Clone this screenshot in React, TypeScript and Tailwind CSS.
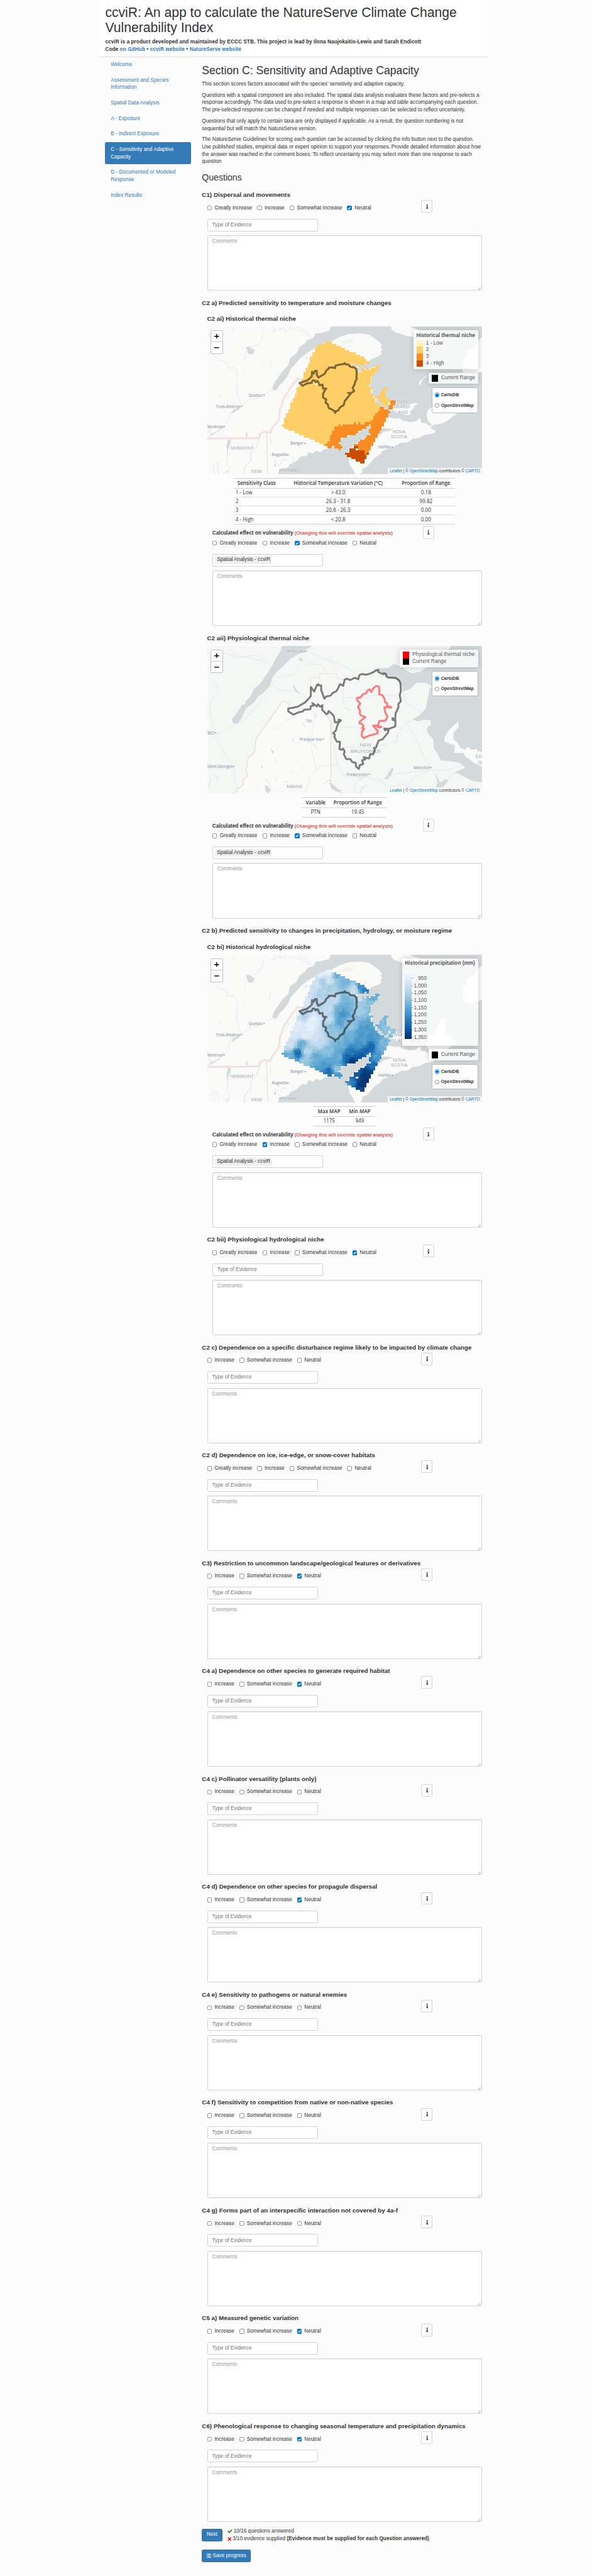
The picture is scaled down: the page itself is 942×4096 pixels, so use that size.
import React from 'react';
import { FaCheck, FaInfo, FaRegSave, FaTimes } from 'react-icons/fa';

const ROW_TOP = 195;
const ROW_H = 17.7;

type Span = [number, number];

const LOW_ROWS: Span[][] = [
  [[666, 702]], [[634, 725]], [[622, 749]], [[610, 770]], [[610, 794]], [[598, 829]], [[598, 853]],
  [[586, 874]], [[586, 886]], [[586, 898]], [[575, 806], [829, 874], [886, 898]], [[575, 829], [933, 956]],
  [[563, 841], [863, 874], [886, 898], [909, 945]], [[563, 841], [863, 945]], [[551, 933]], [[551, 921]],
  [[551, 909]], [[540, 909]], [[540, 909]], [[528, 909]], [[528, 898]], [[516, 921], [978, 1002]],
  [[516, 909], [968, 990]], [[516, 909], [956, 990]], [[505, 921], [956, 990]], [[505, 921], [933, 990]],
  [[494, 933], [945, 1013]], [[494, 933], [956, 1013]], [[482, 945], [968, 1002]], [[482, 956], [978, 990]],
  [[482, 956]], [[470, 956]], [[470, 945]], [[459, 933]], [[459, 921]], [[447, 921]], [[447, 909]],
  [[447, 818], [829, 841], [853, 874]], [[435, 737], [749, 759]], [[447, 714]], [[470, 714]], [[505, 702]],
  [[528, 702]], [[551, 690]], [[586, 690]], [[610, 690]], [[634, 678]], [[655, 666]],
];

const MID_ROWS: Record<number, Span[]> = {
  27: [[1013, 1037]], 28: [[1013, 1037]], 29: [[1002, 1025]], 30: [[956, 978], [1002, 1025]], 31: [[956, 1002]],
  32: [[945, 1013]], 33: [[933, 1002]], 34: [[921, 1002]], 35: [[921, 990]], 36: [[909, 990]],
  37: [[818, 829], [841, 853], [874, 978]], 38: [[737, 749], [759, 898], [909, 978]], 39: [[714, 886], [909, 966]],
  40: [[714, 862], [898, 966]], 41: [[702, 841], [898, 956]], 42: [[702, 829], [909, 945]],
  43: [[690, 782], [886, 945]], 44: [[690, 749], [874, 933]], 45: [[690, 749], [853, 933]],
  46: [[678, 737], [841, 921]], 47: [[666, 749], [818, 921]], 48: [[678, 702], [714, 759], [841, 909]],
  49: [[737, 749], [841, 909]], 50: [[874, 898]], 51: [[874, 886]],
};

const HIGH_ROWS: Record<number, Span[]> = {
  48: [[818, 841]], 49: [[794, 829]], 50: [[794, 874]], 51: [[770, 874], [886, 898]], 52: [[782, 886]],
  53: [[806, 886]], 54: [[829, 874]], 55: [[853, 874]],
};

const rowPath = (rows: Array<[number, Span[]]>) =>
  rows
    .flatMap(([k, spans]) =>
      spans.map(([a, b]) => `M${a} ${(ROW_TOP + k * ROW_H).toFixed(1)}H${b}v${ROW_H + 0.1}H${a}Z`),
    )
    .join('');

const toRows = (r: Record<number, Span[]>): Array<[number, Span[]]> =>
  Object.entries(r).map(([k, v]) => [Number(k), v]);

const lowRows: Array<[number, Span[]]> = LOW_ROWS.map((s, k) => [k, s]);
const LOW_PATH = rowPath(lowRows);
const MID_PATH = rowPath(toRows(MID_ROWS));
const HIGH_PATH = rowPath(toRows(HIGH_ROWS));

const RAIN: Array<[number, number, number]> = [
  [685, 206, 0.08], [640, 226, 0.1], [620, 306, 0.2], [600, 346, 0.22], [740, 276, 0.42], [770, 296, 0.48],
  [730, 241, 0.5], [650, 296, 0.35], [690, 286, 0.2], [860, 336, 0.65], [880, 356, 0.7], [820, 356, 0.25],
  [640, 386, 0.32], [700, 346, 0.35], [570, 456, 0.15], [630, 446, 0.3], [720, 436, 0.25], [770, 436, 0.45],
  [760, 546, 0.62], [740, 506, 0.5], [770, 486, 0.52], [740, 616, 0.55], [680, 506, 0.25], [690, 606, 0.25],
  [560, 566, 0.3], [600, 606, 0.08], [590, 656, 0.08], [520, 656, 0.12], [500, 726, 0.15], [560, 726, 0.12],
  [620, 746, 0.18], [545, 796, 0.5], [480, 806, 0.2], [640, 786, 0.25], [440, 876, 0.55], [450, 826, 0.25],
  [520, 876, 0.8], [490, 906, 0.5], [560, 926, 0.38], [570, 856, 0.3], [620, 906, 0.5], [680, 856, 0.42],
  [700, 646, 0.42], [720, 726, 0.4], [800, 646, 0.4], [880, 666, 0.58], [860, 746, 0.58], [920, 746, 0.6],
  [900, 486, 0.42], [860, 436, 0.35], [920, 406, 0.5], [850, 526, 0.35], [800, 746, 0.5], [750, 826, 0.5],
  [740, 906, 0.5], [780, 906, 0.8], [810, 936, 0.97], [800, 866, 0.72], [880, 846, 0.8], [910, 816, 0.8],
  [850, 896, 0.85], [870, 786, 0.58], [980, 606, 0.45], [980, 666, 0.42], [1020, 696, 0.4], [980, 786, 0.45],
  [960, 826, 0.5], [940, 906, 0.6], [920, 966, 0.75], [680, 1026, 0.78], [660, 966, 0.58], [690, 1056, 0.7],
  [730, 1006, 0.4], [740, 1056, 0.6], [640, 1006, 0.6], [840, 1046, 0.85], [890, 1046, 0.98], [870, 1066, 0.98],
  [800, 1106, 0.7], [785, 1126, 0.62], [860, 1126, 0.98], [850, 1166, 0.9], [850, 806, 0.62],
];

const BLUES = [
  [247, 251, 255], [222, 235, 247], [198, 219, 239], [158, 202, 225], [107, 174, 214],
  [66, 146, 198], [33, 113, 181], [8, 81, 156], [8, 48, 107],
];

const blue = (v: number) => {
  const t = Math.max(0, Math.min(0.999, v)) * 8;
  const i = Math.floor(t);
  const f = t - i;
  return `rgb(${BLUES[i].map((c, n) => Math.round(c + (BLUES[i + 1][n] - c) * f)).join(',')})`;
};

const rainAt = (x: number, y: number) => {
  let sum = 0;
  let weight = 0;
  for (const [px, py, v] of RAIN) {
    const dx = (x - px) * 0.51;
    const dy = (y - py) / 3;
    const w = 1 / Math.pow(dx * dx + dy * dy + 4, 1.7);
    sum += w * v;
    weight += w;
  }
  const noise = Math.sin(x * 12.9898 + y * 78.233) * 43758.5453;
  return sum / weight + (noise - Math.floor(noise) - 0.5) * 0.06;
};

const CELL = 11.75;
const rainCells = [...lowRows, ...toRows(MID_ROWS), ...toRows(HIGH_ROWS)].flatMap(([k, spans]) =>
  spans.flatMap(([a, b]) => {
    const n = Math.max(1, Math.round((b - a) / CELL));
    const w = (b - a) / n;
    return Array.from({ length: n }, (_, i) => {
      const x = a + i * w;
      const y = ROW_TOP + k * ROW_H;
      return { x, y, w, fill: blue(rainAt(x + w / 2, y + ROW_H / 2)) };
    });
  }),
);

const RANGE =
  'M530,530L570,512 595,480 597,440 605,455 612,433 622,433 622,465 630,487 650,470 665,455 672,430 685,415 685,407 710,405 718,412 722,390 750,380 765,378 770,370 775,380 790,382 800,400 820,405 830,415 834,450 832,480 834,497 826,520 822,545 812,572 820,598 805,612 787,612 805,612 790,640 770,680 765,710 745,730 735,755 722,760 720,775 715,760 700,745 685,735 680,705 668,690 672,665 655,650 655,620 665,590 660,578 673,578 655,575 652,545 635,550 630,525 625,515 615,525 612,512 600,510 595,530 570,535 548,555Z';

const MapText = ({ x, y, w, size = 11, bold, children }: { x: number; y: number; w: number; size?: number; bold?: boolean; children: string }) => (
  <text
    transform={`translate(${x} ${y + size * 1.05}) scale(1.96 3)`}
    fontSize={size}
    textLength={w / 1.96}
    lengthAdjust="spacingAndGlyphs"
    fontFamily="Open Sans, Noto Sans, sans-serif"
    fontWeight={bold ? 500 : 600}
    fill="#97a4b1"
    stroke="#fafaf8"
    strokeWidth={1.2}
    paintOrder="stroke"
  >
    {children}
  </text>
);

const Dot = ({ x, y }: { x: number; y: number }) => <rect x={x - 3} y={y - 5} width={6} height={9} fill="#8494a4" />;

const RegionalBase = () => (
  <g>
    <rect x={41} y={72} width={1458} height={1200} fill="#fafaf8" />
    <g fill="#d4dadc">
      <path d="M697,72L688,108 640,125 615,130 605,165 572,180 560,210 530,240 515,290 480,330 470,390 440,435 415,490 398,525 385,575 395,592 410,585 425,545 442,525 470,465 482,420 510,375 535,330 570,288 612,250 650,215 700,195 740,160 790,135 850,128 900,140 935,175 955,200 970,232 958,235 970,260 960,280 968,292 950,315 915,335 898,355 890,378 830,375 806,372 806,388 840,400 843,440 860,440 862,418 900,415 930,400 945,400 920,465 910,490 910,550 898,560 920,585 912,610 925,640 940,660 935,690 950,720 970,745 1000,770 1005,810 1040,822 1060,818 1080,838 1120,850 1150,842 1170,812 1175,855 1200,858 1225,885 1232,870 1210,830 1205,790 1212,750 1240,715 1265,650 1285,600 1300,588 1308,610 1302,660 1310,720 1335,720 1340,760 1370,775 1335,815 1310,845 1290,858 1240,872 1225,895 1255,925 1240,940 1190,955 1170,975 1130,985 1100,1015 1070,1015 1020,1055 970,1085 960,1110 930,1140 900,1190 885,1215 865,1225 860,1265 845,1272 1499,1272 1499,72Z" />
      <path d="M415,1272L425,1235 470,1215 480,1190 515,1165 530,1140 550,1120 565,1130 580,1090 600,1105 620,1080 640,1095 660,1070 700,1062 750,1050 740,1000 755,985 780,965 835,945 865,915 895,885 908,868 905,905 915,940 890,965 855,995 820,1030 800,1070 775,1110 790,1140 795,1195 815,1235 825,1272Z" />
      <path d="M925,950L950,915 980,900 1025,905 1010,918 975,930 955,955 930,965Z" />
      <path d="M243,240L262,235 275,250 290,262 288,290 270,300 255,292 252,265Z" />
      <path d="M168,778L178,752 200,738 213,730 207,750 190,760 178,776Z" />
      <path d="M41,975L60,945 95,925 118,895 112,912 78,945Z" />
      <path d="M150,985L165,990 160,1030 148,1085 152,1150 146,1100 143,1050Z" />
      <path d="M246,935L252,930 254,965 248,985ZM393,1190L405,1188 403,1210 395,1205ZM565,322L572,325 570,338 563,332Z" />
    </g>
    <g fill="#fafaf8">
      <path d="M1018,72L1018,95 1035,115 1060,130 1100,150 1140,160 1165,145 1160,110 1175,105 1130,85 1120,72Z" />
      <path d="M1499,160L1470,190 1460,240 1410,270 1420,300 1400,340 1395,420 1400,450 1410,468 1450,462 1499,440Z" />
      <path d="M1002,690L1025,700 1045,715 1080,712 1110,705 1150,695 1163,700 1140,715 1135,745 1118,755 1120,790 1095,795 1070,775 1030,778 1000,740Z" />
      <path d="M1162,545L1168,515 1195,480 1215,465 1185,500 1173,530 1178,545Z" />
    </g>
    <path d="M745,200L780,180 805,178 812,162 820,185 815,205 780,208 770,215Z" fill="#f2f4f2" />
    <g fill="none" stroke="#d9dfe2" strokeWidth={0.6}>
      <g>
        <path vectorEffect="non-scaling-stroke" d="M348,72L335,130 330,180 310,225 270,235M390,72L400,95 380,120 430,90M420,72L425,100 450,85 460,125M480,72L475,90 530,105 590,155 605,170M515,72L560,110 580,135 595,165M45,130L60,170 95,200 120,230 138,262M41,290L75,300 100,345 140,365 150,410 185,405 200,450 195,600 220,710M170,85L180,110 165,140M245,290L240,330 245,350M240,455L238,490M105,620L115,650 110,630" />
        <path vectorEffect="non-scaling-stroke" d="M340,628L370,600 395,588M340,632L300,660 260,665 220,720 165,760 150,830 130,890 60,950M200,585L185,560M317,980L300,1060 270,1100 272,1160 240,1210 236,1272M355,1100L350,1080M165,1000L160,1100M150,1080L145,1180 160,1230 125,1272M460,678L470,640 500,600 520,550M370,960L380,1000 376,1030M395,1210L400,1160 430,1230 440,1272M430,1190L440,1150 470,1160M500,1195L495,1150 510,1130M540,1190L560,1140 575,1160M82,1272L70,1200 95,1180 100,1272M380,370L370,410 375,440M330,370L340,395M1150,1010L1130,960M960,700L970,720" />
      </g>
    </g>
    <g fill="none">
      <path vectorEffect="non-scaling-stroke" stroke="#f5eded" strokeWidth={4} d="M41,983L315,980 320,945 345,925 375,935 385,895 420,835 428,740 445,660 490,555 520,495 538,505" />
      <path vectorEffect="non-scaling-stroke" stroke="#ecd3d5" strokeWidth={1} d="M41,983L315,980 325,940 345,925 355,935 375,935 385,895 412,845 425,800 422,750 440,700 450,645 490,555 520,495 538,505 M355,935L362,1272M41,870L60,945M145,1272L148,1240 158,1260M317,980L320,950" />
      <path vectorEffect="non-scaling-stroke" stroke="#dfe0e2" strokeWidth={0.8} d="M317,985L300,1060 272,1100 268,1170 240,1210 236,1272" />
    </g>
    <MapText x={260} y={630} w={75}>Quebec</MapText><Dot x={342} y={630} />
    <MapText x={86} y={722} w={130}>Trois-Rivières</MapText><Dot x={222} y={722} />
    <MapText x={41} y={887} w={84}>Montreal</MapText><Dot x={130} y={887} />
    <MapText x={482} y={1023} w={70}>Bangor</MapText><Dot x={560} y={1022} />
    <MapText x={382} y={1115} w={82}>Augusta</MapText><Dot x={469} y={1115} />
    <MapText x={432} y={1241} w={84}>Portland</MapText><Dot x={426} y={1241} />
    <MapText x={948} y={1052} w={67}>Halifax</MapText><Dot x={1022} y={1052} />
    <MapText x={165} y={1061} w={122} size={12.5} bold>VERMONT</MapText>
    <MapText x={272} y={1249} w={59} size={12.5} bold>NEW</MapText>
    <MapText x={1015} y={681} w={90} size={12.5} bold>PRINCE</MapText>
    <MapText x={1005} y={724} w={110} size={12.5} bold>EDWARD</MapText>
    <MapText x={1015} y={768} w={90} size={12.5} bold>ISLAND</MapText>
    <MapText x={1024} y={925} w={69} size={12.5} bold>NOVA</MapText>
    <MapText x={1015} y={969} w={88} size={12.5} bold>SCOTIA</MapText>
  </g>
);

const RangeOutline = () => (
  <path d={RANGE} vectorEffect="non-scaling-stroke" fill="none" stroke="#000" strokeOpacity={0.5} strokeWidth={3.2} strokeLinejoin="round" />
);

const ThermalMap = () => (
  <svg viewBox="41 72 1458 1200" preserveAspectRatio="none" className="block h-full w-full">
    <RegionalBase />
    <path d={LOW_PATH} fill="#fecf67" shapeRendering="crispEdges" />
    <path d={MID_PATH} fill="#f98c22" shapeRendering="crispEdges" />
    <path d={HIGH_PATH} fill="#cc4c02" shapeRendering="crispEdges" />
    <path d="M610,531h24v18h-24ZM551,549h12v18h-12ZM598,514h12v17h-12Z" fill="#fff2b0" />
    <RangeOutline />
  </svg>
);

const RainMap = () => (
  <svg viewBox="41 72 1458 1200" preserveAspectRatio="none" className="block h-full w-full">
    <RegionalBase />
    <g shapeRendering="crispEdges">
      {rainCells.map((c, i) => (
        <rect key={i} x={c.x} y={c.y} width={c.w + 0.3} height={ROW_H + 0.3} fill={c.fill} />
      ))}
    </g>
    <RangeOutline />
  </svg>
);

const PhysiologicalMap = () => (
  <svg viewBox="41 141 1458 1200" preserveAspectRatio="none" className="block h-full w-full">
    <rect x={41} y={141} width={1458} height={1200} fill="#f5f7f5" />
    <path d="M180,1341L230,1270 245,1200 250,1080 290,1005 305,890 440,590 470,600 475,650 500,700 590,640 640,650 695,745 697,1200 700,1260 760,1341Z" fill="#fafaf8" />
    <g fill="#d4dadc">
      <path d="M437,141L430,180 405,240 385,300 350,385 325,440 290,490 265,560 230,610 200,680 170,740 180,775 205,770 225,720 245,650 290,600 305,560 340,520 375,460 385,400 410,350 440,310 480,250 540,190 600,141Z" />
      <path d="M920,330L950,320 1000,322 1030,288 1070,310 1110,350 1125,365 1170,350 1210,310 1240,270 1300,200 1325,165 1335,141 1499,141 1499,1248 1450,1240 1400,1200 1355,1165 1410,1130 1380,1090 1310,1075 1280,1070 1265,1020 1245,980 1240,900 1210,850 1205,810 1228,780 1225,745 1190,740 1160,755 1130,740 1170,700 1200,650 1215,540 1220,490 1235,470 1200,440 1150,440 1120,490 1080,510 1066,440 1040,405 1000,398 960,350Z" />
      <path d="M1248,1170L1262,1210 1278,1250 1305,1222 1322,1230 1310,1255 1290,1290 1255,1290 1262,1250Z" />
      <path d="M540,235L548,262 524,264 530,245ZM560,735L595,740 600,760 575,765ZM980,1220L1000,1180 1020,1130 1030,1140 1015,1190 1000,1225ZM690,1250L720,1280 740,1310 760,1310 735,1330 700,1300ZM350,1270L370,1290 380,1310 360,1341 345,1300ZM375,975L395,1000 390,1020ZM490,880L500,920 492,910ZM325,1105L335,1130 328,1135ZM495,450L515,500 540,535 510,515 498,480Z" />
    </g>
    <path d="M215,605L245,598 240,615 220,622Z" fill="#f5f7f5" />
    <path d="M1371,755L1375,800 1350,840 1345,895 1370,930 1385,970 1410,985 1425,955 1440,985 1499,975 1499,1120 1460,1095 1430,1060 1410,1040 1400,1010 1350,1010 1355,950 1300,918 1300,885 1320,830Z" fill="#fafaf8" />
    <g fill="none" strokeWidth={0.7} stroke="#dde2e4">
      <path vectorEffect="non-scaling-stroke" d="M41,200L150,205 200,235 300,215 360,280M150,160L200,220 330,260 350,310M80,430L100,500 60,600 55,700 80,830M385,450L430,500 520,510 560,560M385,450L350,540 240,740 130,830 80,870M80,880L120,980 180,1130 200,1330M530,300L500,370 410,400M560,290L640,290 690,400M680,235L705,270 710,300M760,430L765,620M540,160L650,240 760,300 820,350M640,720L690,700M630,640L600,800 590,950 620,1140M700,740L705,900 730,1100 700,1110M520,710L450,750 410,820 390,820M730,1100L760,1190 840,1200 900,1210 960,1240M715,1110L640,1120 590,1190 560,1341M730,960L880,970 960,950 1050,910 1050,850 1090,780 1130,740M1080,510L1090,600 1200,700M1100,780L1150,900 1200,1080 1225,1140M960,1230L1040,1180 1220,1150 1310,1150 1400,1110M870,1190L820,1280 830,1341M940,1210L1000,1290 1100,1260 1080,1341M1225,1150L1140,1200 1100,1300M850,560L860,580M760,560L880,570 930,540 1060,540M740,800L860,800 900,830 1000,840M600,940L620,970M400,1050L410,1100M480,1180L500,1160M540,1100L550,1150M620,1130L615,1170" />
      <path vectorEffect="non-scaling-stroke" stroke="#cdd5da" d="M600,670L620,710 605,715M770,640L795,660M75,1190L95,1210 90,1240M60,1210L50,1290M540,760L560,800M1050,870L1050,910 1030,930M410,1240L400,1210M840,1200L855,1225 880,1200M350,1220L370,1260 385,1300M600,930L618,968M450,1250L470,1240M660,1260L690,1230 700,1290M850,1341L865,1290 890,1270" />
    </g>
    <g fill="none" stroke="#ecd0d3" strokeWidth={1.1}>
      <path vectorEffect="non-scaling-stroke" d="M178,1341L205,1300 230,1270 232,1225 255,1200 245,1150 255,1110 250,1080 265,1040 290,1005 300,895 440,590 472,605 472,650M670,700L695,745 697,1200 693,1240 710,1290 760,1341" />
      <path vectorEffect="non-scaling-stroke" strokeDasharray="1.5 1.2" d="M590,480V402H636V367H728V400L745,405 775,425M1325,1225L1345,1178H1365" />
    </g>
    <MapText x={464} y={184} w={94}>Rimouski</MapText><Dot x={564} y={184} />
    <MapText x={41} y={850} w={38}>BEC</MapText><Dot x={85} y={847} />
    <MapText x={531} y={901} w={118}>Presque Isle</MapText><Dot x={656} y={899} />
    <MapText x={41} y={1122} w={134}>Saint-Georges</MapText><Dot x={181} y={1120} />
    <MapText x={1135} y={1131} w={88}>Moncton</MapText><Dot x={1228} y={1129} />
    <MapText x={780} y={1185} w={114}>Fredericton</MapText><Dot x={901} y={1184} />
    <MapText x={461} y={1282} w={86} size={13} bold>MAINE</MapText>
    <MapText x={849} y={947} w={63} size={13} bold>NEW</MapText>
    <MapText x={800} y={995} w={161} size={13} bold>BRUNSWICK</MapText>
    <MapText x={1474} y={992} w={25} size={13} bold>PR</MapText>
    <MapText x={1464} y={1038} w={34} size={13} bold>ED</MapText>
    <MapText x={1476} y={1085} w={22} size={13} bold>IS</MapText>
    <g fill="none" strokeWidth={3} strokeLinejoin="round" strokeLinecap="round">
      <path
        vectorEffect="non-scaling-stroke"
        stroke="#000"
        strokeOpacity={0.5}
        d="M470,650L520,635 560,600 590,550 590,475 608,512 622,460 630,452 630,462 645,462 645,500 655,540 662,570 672,552 695,545 705,525 725,510 735,485 745,452 762,465 770,415 780,408 800,418 825,400 842,412 848,378 860,370 885,375 915,360 935,342 948,338 950,355 975,372 978,362 990,370 990,385 1000,398 1040,402 1058,420 1066,445 1068,510 1062,540 1068,590 1055,612 1055,640 1040,690 1038,740 1023,728 1025,742 1040,750 1038,795 1005,815 980,812 983,825 1003,820 1000,845 970,900 950,910 935,970 925,970 930,990 920,1022 905,1020 900,1055 870,1045 880,1062 862,1070 868,1100 850,1110 845,1140 830,1120 828,1090 810,1085 800,1060 778,1060 765,1020 770,1000 762,975 755,985 742,978 745,920 728,918 715,880 718,862 708,850 723,830 730,790 738,765 750,745 738,740 738,762 718,762 712,710 700,690 685,670 680,690 672,695 650,660 652,622 640,635 628,615 622,632 598,605 605,625 590,630 588,655 555,660 545,675 525,680 498,700 470,672Z"
      />
      <path
        vectorEffect="non-scaling-stroke"
        stroke="#f00"
        strokeOpacity={0.5}
        d="M935,470L945,466 953,475 953,535 968,540 980,565 985,600 995,605 995,625 1018,640 980,640 985,680 997,718 985,750 955,750 945,790 965,800 950,804 940,788 920,788 945,830 945,850 900,870 872,890 860,870 862,840 873,815 862,810 870,795 862,775 848,770 850,755 880,720 855,705 850,690 852,665 840,640 853,610 835,580 836,565 858,555 865,535 885,525 890,505 902,495 912,515 918,495 925,480Z"
      />
    </g>
  </svg>
);

const LayerPicker = () => (
  <div className="flex h-69 w-125 flex-col gap-14 rounded-[3px] border border-[#b4b8ba] bg-white pt-12 pl-6 text-[7.05px] font-bold leading-14">
    <div className="flex items-center gap-4">
      <span className="flex h-13 w-13 items-center justify-center rounded-full border border-[#2a86d8]">
        <span className="h-8 w-8 rounded-full bg-[#0075d8]" />
      </span>
      CartoDB
    </div>
    <div className="flex items-center gap-4">
      <span className="h-13 w-13 rounded-full border border-[#8a8a8a]" />
      OpenStreetMap
    </div>
  </div>
);

const LEGEND = 'rounded-[3px] bg-white/80 shadow-[0_0_9px_rgba(0,0,0,0.2)] text-[8.22px] text-[#555]';

const Key = ({ color, children }: { color: string; children: string }) => (
  <div className="flex h-18 items-center gap-8 whitespace-nowrap leading-18">
    <span className={`h-18 w-18 ${color}`} />
    {children}
  </div>
);

const CurrentRange = () => (
  <div className={`${LEGEND} h-30 w-134 px-8 py-6`}>
    <Key color="bg-black">Current Range</Key>
  </div>
);

const MapFrame = ({ map, children }: { map: React.ReactNode; children: React.ReactNode }) => (
  <div className="relative ml-14 h-400 w-744 overflow-hidden">
    {map}
    <div className="absolute top-10 left-10 flex h-64 w-33 flex-col rounded-[2px] border border-[#bfc3c4] bg-white text-black">
      <span className="flex flex-1 items-center justify-center border-b border-[#ccc]">
        <svg viewBox="0 0 12 12" className="h-13 w-13"><path d="M6 0v12M0 6h12" stroke="#000" strokeWidth="2.2" /></svg>
      </span>
      <span className="flex flex-1 items-center justify-center">
        <svg viewBox="0 0 12 12" className="h-13 w-13"><path d="M0 6h12" stroke="#000" strokeWidth="2.2" /></svg>
      </span>
    </div>
    <div className="absolute top-10 right-10 flex flex-col items-end gap-10">{children}</div>
    <div className="absolute right-0 bottom-0 h-17 w-254 bg-white/70 pl-5 text-[6.46px] leading-17 whitespace-nowrap">
      <span className="text-[#0078a8]">Leaflet</span> | © <span className="text-[#0078a8]">OpenStreetMap</span> contributors ©{' '}
      <span className="text-[#0078a8]">CARTO</span>
    </div>
  </div>
);

const Box = ({ checked }: { checked?: boolean }) =>
  checked ? (
    <span className="flex h-13 w-13 shrink-0 items-center justify-center rounded-[1.5px] bg-[#0075d8]">
      <svg viewBox="0 0 13 13" className="h-full w-full">
        <path d="M3 6.8l2.4 2.5L10 3.6" fill="none" stroke="#fff" strokeWidth="2" />
      </svg>
    </span>
  ) : (
    <span className="h-13 w-13 shrink-0 rounded-[1.5px] border border-[#8f8f8f] bg-white" />
  );

const WIDTHS: Record<string, string> = {
  'Greatly increase': 'w-136',
  Increase: 'w-87.5',
  'Somewhat increase': 'w-156',
  Neutral: 'w-80',
};

const Choices = ({ picked, short }: { picked?: string; short?: boolean }) => (
  <div className="flex h-20 items-center text-[8.22px] leading-20">
    {Object.keys(WIDTHS)
      .slice(short ? 1 : 0)
      .map((name) => (
        <label key={name} className={`flex shrink-0 items-center gap-7 whitespace-nowrap ${WIDTHS[name]}`}>
          <Box checked={picked === name} />
          {name}
        </label>
      ))}
  </div>
);

const InfoButton = () => (
  <span className="flex h-34 w-31 shrink-0 items-center justify-center rounded-[2.4px] border border-[#d2d2d2] bg-white">
    <FaInfo className="h-12 w-6" />
  </span>
);

const Answer = ({ chip }: { chip?: boolean }) => (
  <>
    <div className="flex h-34 w-300 items-center rounded-[2.4px] border border-[#d2d2d2] bg-white text-[8.22px] text-[#777]">
      {chip ? (
        <span className="ml-6 h-22 rounded-[2px] bg-[#efefef] px-5 leading-22 text-[#333]">Spatial Analysis - ccviR</span>
      ) : (
        <span className="ml-12 leading-20">Type of Evidence</span>
      )}
    </div>
    <div className="relative mt-11 h-150 rounded-[2.4px] border border-[#d2d2d2] bg-white pt-5 pl-12 text-[8.22px] leading-20 text-[#999] shadow-[inset_0_1px_1px_rgba(0,0,0,0.06)]">
      Comments
      <svg viewBox="0 0 9 9" className="absolute right-0 bottom-0 h-9 w-9">
        <path d="M1 8L8 1M5 8l3-3" stroke="#666" strokeWidth="1" />
      </svg>
    </div>
  </>
);

const Heading = ({ children }: { children: string }) => (
  <h4 className="text-[9.85px] font-bold leading-20 whitespace-nowrap">{children}</h4>
);

const Question = ({ title, picked, short, nested }: { title: string; picked?: string; short?: boolean; nested?: boolean }) => (
  <section className={`h-292 ${nested ? 'pl-14' : ''}`}>
    <div className="h-24">
      <Heading>{title}</Heading>
    </div>
    <div className="pl-14">
      <div className={`flex h-50 justify-between ${nested ? 'pr-129' : 'pr-133'}`}>
        <div className="pt-11">
          <Choices picked={picked} short={short} />
        </div>
        <InfoButton />
      </div>
      <Answer />
    </div>
  </section>
);

const SpatialAnswer = ({ picked }: { picked: string }) => (
  <section className="mt-4 h-293 pl-28">
    <div className="flex h-75 justify-between pr-129">
      <div className="pt-10">
        <p className="h-26 text-[8.22px] font-bold leading-20 whitespace-nowrap">
          Calculated effect on vulnerability{' '}
          <span className="text-[7.4px] text-[#d9534f]">(Changing this will override spatial analysis)</span>
        </p>
        <Choices picked={picked} />
      </div>
      <InfoButton />
    </div>
    <Answer chip />
  </section>
);

const DataTable = ({ cols, head, rows, leftFirst, width }: { cols: string; head: string[]; rows: string[][]; leftFirst?: boolean; width: string }) => (
  <div className="mt-10 flex w-772 justify-center">
    <div className={`border-y border-[#d0d0d0] bg-white font-['Open_Sans','Noto_Sans',sans-serif] text-[8.1px] ${width}`}>
      <div className={`grid h-27 items-center border-b border-[#d0d0d0] text-center text-[7.95px] font-semibold leading-24 whitespace-nowrap ${cols}`}>
        {head.map((h) => (
          <span key={h}>{h}</span>
        ))}
      </div>
      {rows.map((r, i) => (
        <div key={r[0]} className={`grid h-24 items-center text-center leading-22 ${cols} ${i < rows.length - 1 ? 'border-b border-[#dedede]' : ''}`}>
          {r.map((c, j) => (
            <span key={j} className={j === 0 && leftFirst ? 'pl-5 text-left' : ''}>
              {c}
            </span>
          ))}
        </div>
      ))}
    </div>
  </div>
);

const NAV: Array<[string, string?]> = [
  ['Welcome'],
  ['Assessment and Species', 'Information'],
  ['Spatial Data Analysis'],
  ['A - Exposure'],
  ['B - Indirect Exposure'],
  ['C - Sensitivity and Adaptive', 'Capacity'],
  ['D - Documented or Modeled', 'Response'],
  ['Index Results'],
];

const INTRO = [
  ["This section scores factors associated with the species' sensitivity and adaptive capacity."],
  [
    'Questions with a spatial component are also included. The spatial data analysis evaluates these factors and pre-selects a',
    'response accordingly. The data used to pre-select a response is shown in a map and table accompanying each question.',
    'The pre-selected response can be changed if needed and multiple responses can be selected to reflect uncertainty.',
  ],
  [
    'Questions that only apply to certain taxa are only displayed if applicable. As a result, the question numbering is not',
    'sequential but will match the NatureServe version.',
  ],
  [
    'The NatureServe Guidelines for scoring each question can be accessed by clicking the info button next to the question.',
    'Use published studies, empirical data or expert opinion to support your responses. Provide detailed information about how',
    'the answer was reached in the comment boxes. To reflect uncertainty you may select more than one response to each',
    'question',
  ],
];

const RAIN_TICKS = ['950', '1,000', '1,050', '1,100', '1,150', '1,200', '1,250', '1,300', '1,350'];

const REST: Array<[string, string?, boolean?]> = [
  ['C2 c) Dependence on a specific disturbance regime likely to be impacted by climate change'],
  ['C2 d) Dependence on ice, ice-edge, or snow-cover habitats', undefined, true],
  ['C3) Restriction to uncommon landscape/geological features or derivatives', 'Neutral'],
  ['C4 a) Dependence on other species to generate required habitat', 'Neutral'],
  ['C4 c) Pollinator versatility (plants only)'],
  ['C4 d) Dependence on other species for propagule dispersal', 'Neutral'],
  ['C4 e) Sensitivity to pathogens or natural enemies'],
  ['C4 f) Sensitivity to competition from native or non-native species'],
  ['C4 g) Forms part of an interspecific interaction not covered by 4a-f'],
  ['C5 a) Measured genetic variation', 'Neutral'],
  ['C6) Phenological response to changing seasonal temperature and precipitation dynamics', 'Neutral'],
];

export default function App() {
  return (
    <div className="min-h-screen overflow-hidden bg-[#fcfcfc] font-['Liberation_Sans',Arial,sans-serif] text-[#333] [--spacing:0.5874px]">
      <div className="ml-270 w-1050">
        <header className="h-155 border-b border-[#ddd] bg-white px-15 pt-14">
          <h1 className="text-[21.15px] leading-40 whitespace-nowrap">
            ccviR: An app to calculate the NatureServe Climate Change
            <br />
            Vulnerability Index
          </h1>
          <p className="mt-10 text-[8.22px] font-bold leading-20 tracking-[0.075px] whitespace-nowrap">
            ccviR is a product developed and maintained by ECCC STB. This project is lead by Ilona Naujokaitis-Lewis and Sarah Endicott
            <br />
            Code <a className="text-[#337ab7]">on GitHub</a> • <a className="text-[#337ab7]">ccviR website</a> •{' '}
            <a className="text-[#337ab7]">NatureServe website</a>
          </p>
        </header>
        <div className="flex">
          <nav className="flex w-262 shrink-0 flex-col gap-2 px-15 text-[8.22px] leading-20">
            {NAV.map(([a, b]) => (
              <a
                key={a}
                className={`rounded-[2.4px] px-15 py-10 whitespace-nowrap ${a.startsWith('C ') ? 'bg-[#337ab7] text-white' : 'text-[#337ab7]'}`}
              >
                {a}
                {b && <br />}
                {b}
              </a>
            ))}
          </nav>
          <main className="w-788 shrink-0 pt-20 pr-15 pl-15">
            <h2 className="h-43 text-[17.62px] leading-33 whitespace-nowrap">Section C: Sensitivity and Adaptive Capacity</h2>
            {INTRO.map((lines) => (
              <p key={lines[0]} className="mb-10 text-[8.22px] leading-20 whitespace-nowrap">
                {lines.map((l) => (
                  <React.Fragment key={l}>
                    {l}
                    <br />
                  </React.Fragment>
                ))}
              </p>
            ))}
            <h3 className="h-60 pt-10 text-[14.1px] leading-26">Questions</h3>

            <Question title="C1) Dispersal and movements" picked="Neutral" />

            <div className="h-43">
              <Heading>C2 a) Predicted sensitivity to temperature and moisture changes</Heading>
            </div>
            <div className="h-31 pl-14">
              <Heading>C2 ai) Historical thermal niche</Heading>
            </div>
            <MapFrame map={<ThermalMap />}>
              <div className={`${LEGEND} h-105 w-175 px-8 pt-6`}>
                <p className="h-21 font-bold leading-18 whitespace-nowrap">Historical thermal niche</p>
                <Key color="bg-[#fff5b8]">1 - Low</Key>
                <Key color="bg-[#fecf67]">2</Key>
                <Key color="bg-[#f98c22]">3</Key>
                <Key color="bg-[#cc4c02]">4 - High</Key>
              </div>
              <CurrentRange />
              <LayerPicker />
            </MapFrame>
            <DataTable
              width="w-600"
              cols="grid-cols-[124fr_318fr_158fr]"
              leftFirst
              head={['Sensitivity Class', 'Historical Temperature Variation (°C)', 'Proportion of Range']}
              rows={[
                ['1 - Low', '> 43.0', '0.18'],
                ['2', '26.3 - 31.8', '99.82'],
                ['3', '20.8 - 26.3', '0.00'],
                ['4 - High', '< 20.8', '0.00'],
              ]}
            />
            <SpatialAnswer picked="Somewhat increase" />

            <div className="h-31 pl-14">
              <Heading>C2 aii) Physiological thermal niche</Heading>
            </div>
            <MapFrame map={<PhysiologicalMap />}>
              <div className={`${LEGEND} h-48 w-212 px-8 py-6`}>
                <Key color="bg-[#f00]">Physiological thermal niche</Key>
                <Key color="bg-black">Current Range</Key>
              </div>
              <LayerPicker />
            </MapFrame>
            <DataTable width="w-228" cols="grid-cols-[72fr_156fr]" head={['Variable', 'Proportion of Range']} rows={[['PTN', '19.45']]} />
            <SpatialAnswer picked="Somewhat increase" />

            <div className="h-44">
              <Heading>C2 b) Predicted sensitivity to changes in precipitation, hydrology, or moisture regime</Heading>
            </div>
            <div className="h-31 pl-14">
              <Heading>C2 bi) Historical hydrological niche</Heading>
            </div>
            <MapFrame map={<RainMap />}>
              <div className={`${LEGEND} h-236 w-206 px-8 pt-6`}>
                <p className="h-29 font-bold leading-18 whitespace-nowrap">Historical precipitation (mm)</p>
                <div className="flex">
                  <div className="h-183 w-18 bg-[linear-gradient(#f7fbff,#deebf7_12.5%,#c6dbef_25%,#9ecae1_37.5%,#6baed6_50%,#4292c6_62.5%,#2171b5_75%,#08519c_87.5%,#08306b)]" />
                  <div className="w-41 pt-9 text-right">
                    {RAIN_TICKS.map((t) => (
                      <div key={t} className="flex h-20 items-center justify-between leading-20">
                        <span className="h-px w-4 bg-[#888]" />
                        {t}
                      </div>
                    ))}
                  </div>
                </div>
              </div>
              <CurrentRange />
              <LayerPicker />
            </MapFrame>
            <DataTable width="w-166" cols="grid-cols-2" head={['Max MAP', 'Min MAP']} rows={[['1175', '949']]} />
            <SpatialAnswer picked="Increase" />

            <Question title="C2 bii) Physiological hydrological niche" picked="Neutral" nested />
            {REST.map(([title, picked, full]) => (
              <Question key={title} title={title} picked={picked} short={!full} />
            ))}

            <div className="-mt-5 flex h-57 text-[8.22px]">
              <button className="h-34 w-55 rounded-[2.4px] border border-[#2e6da4] bg-[#337ab7] text-white">Next</button>
              <div className="pt-0 pl-14 leading-20 whitespace-nowrap">
                <p className="-mt-2 flex items-center gap-4">
                  <FaCheck className="h-13 w-13 text-[#008000]" />
                  10/16 questions answered
                </p>
                <p className="flex items-center">
                  <FaTimes className="mr-3 h-14 w-11 text-[#f00]" />
                  <span>
                    3/10 evidence supplied{' '}
                    <b className="tracking-[0.05px]">(Evidence must be supplied for each Question answered)</b>
                  </span>
                </p>
              </div>
            </div>
            <button className="flex h-34 w-132 items-center justify-center gap-4 rounded-[2.4px] border border-[#2e6da4] bg-[#337ab7] text-[8.22px] text-white">
              <FaRegSave className="h-13 w-13" />
              Save progress
            </button>
          </main>
        </div>
      </div>
    </div>
  );
}
